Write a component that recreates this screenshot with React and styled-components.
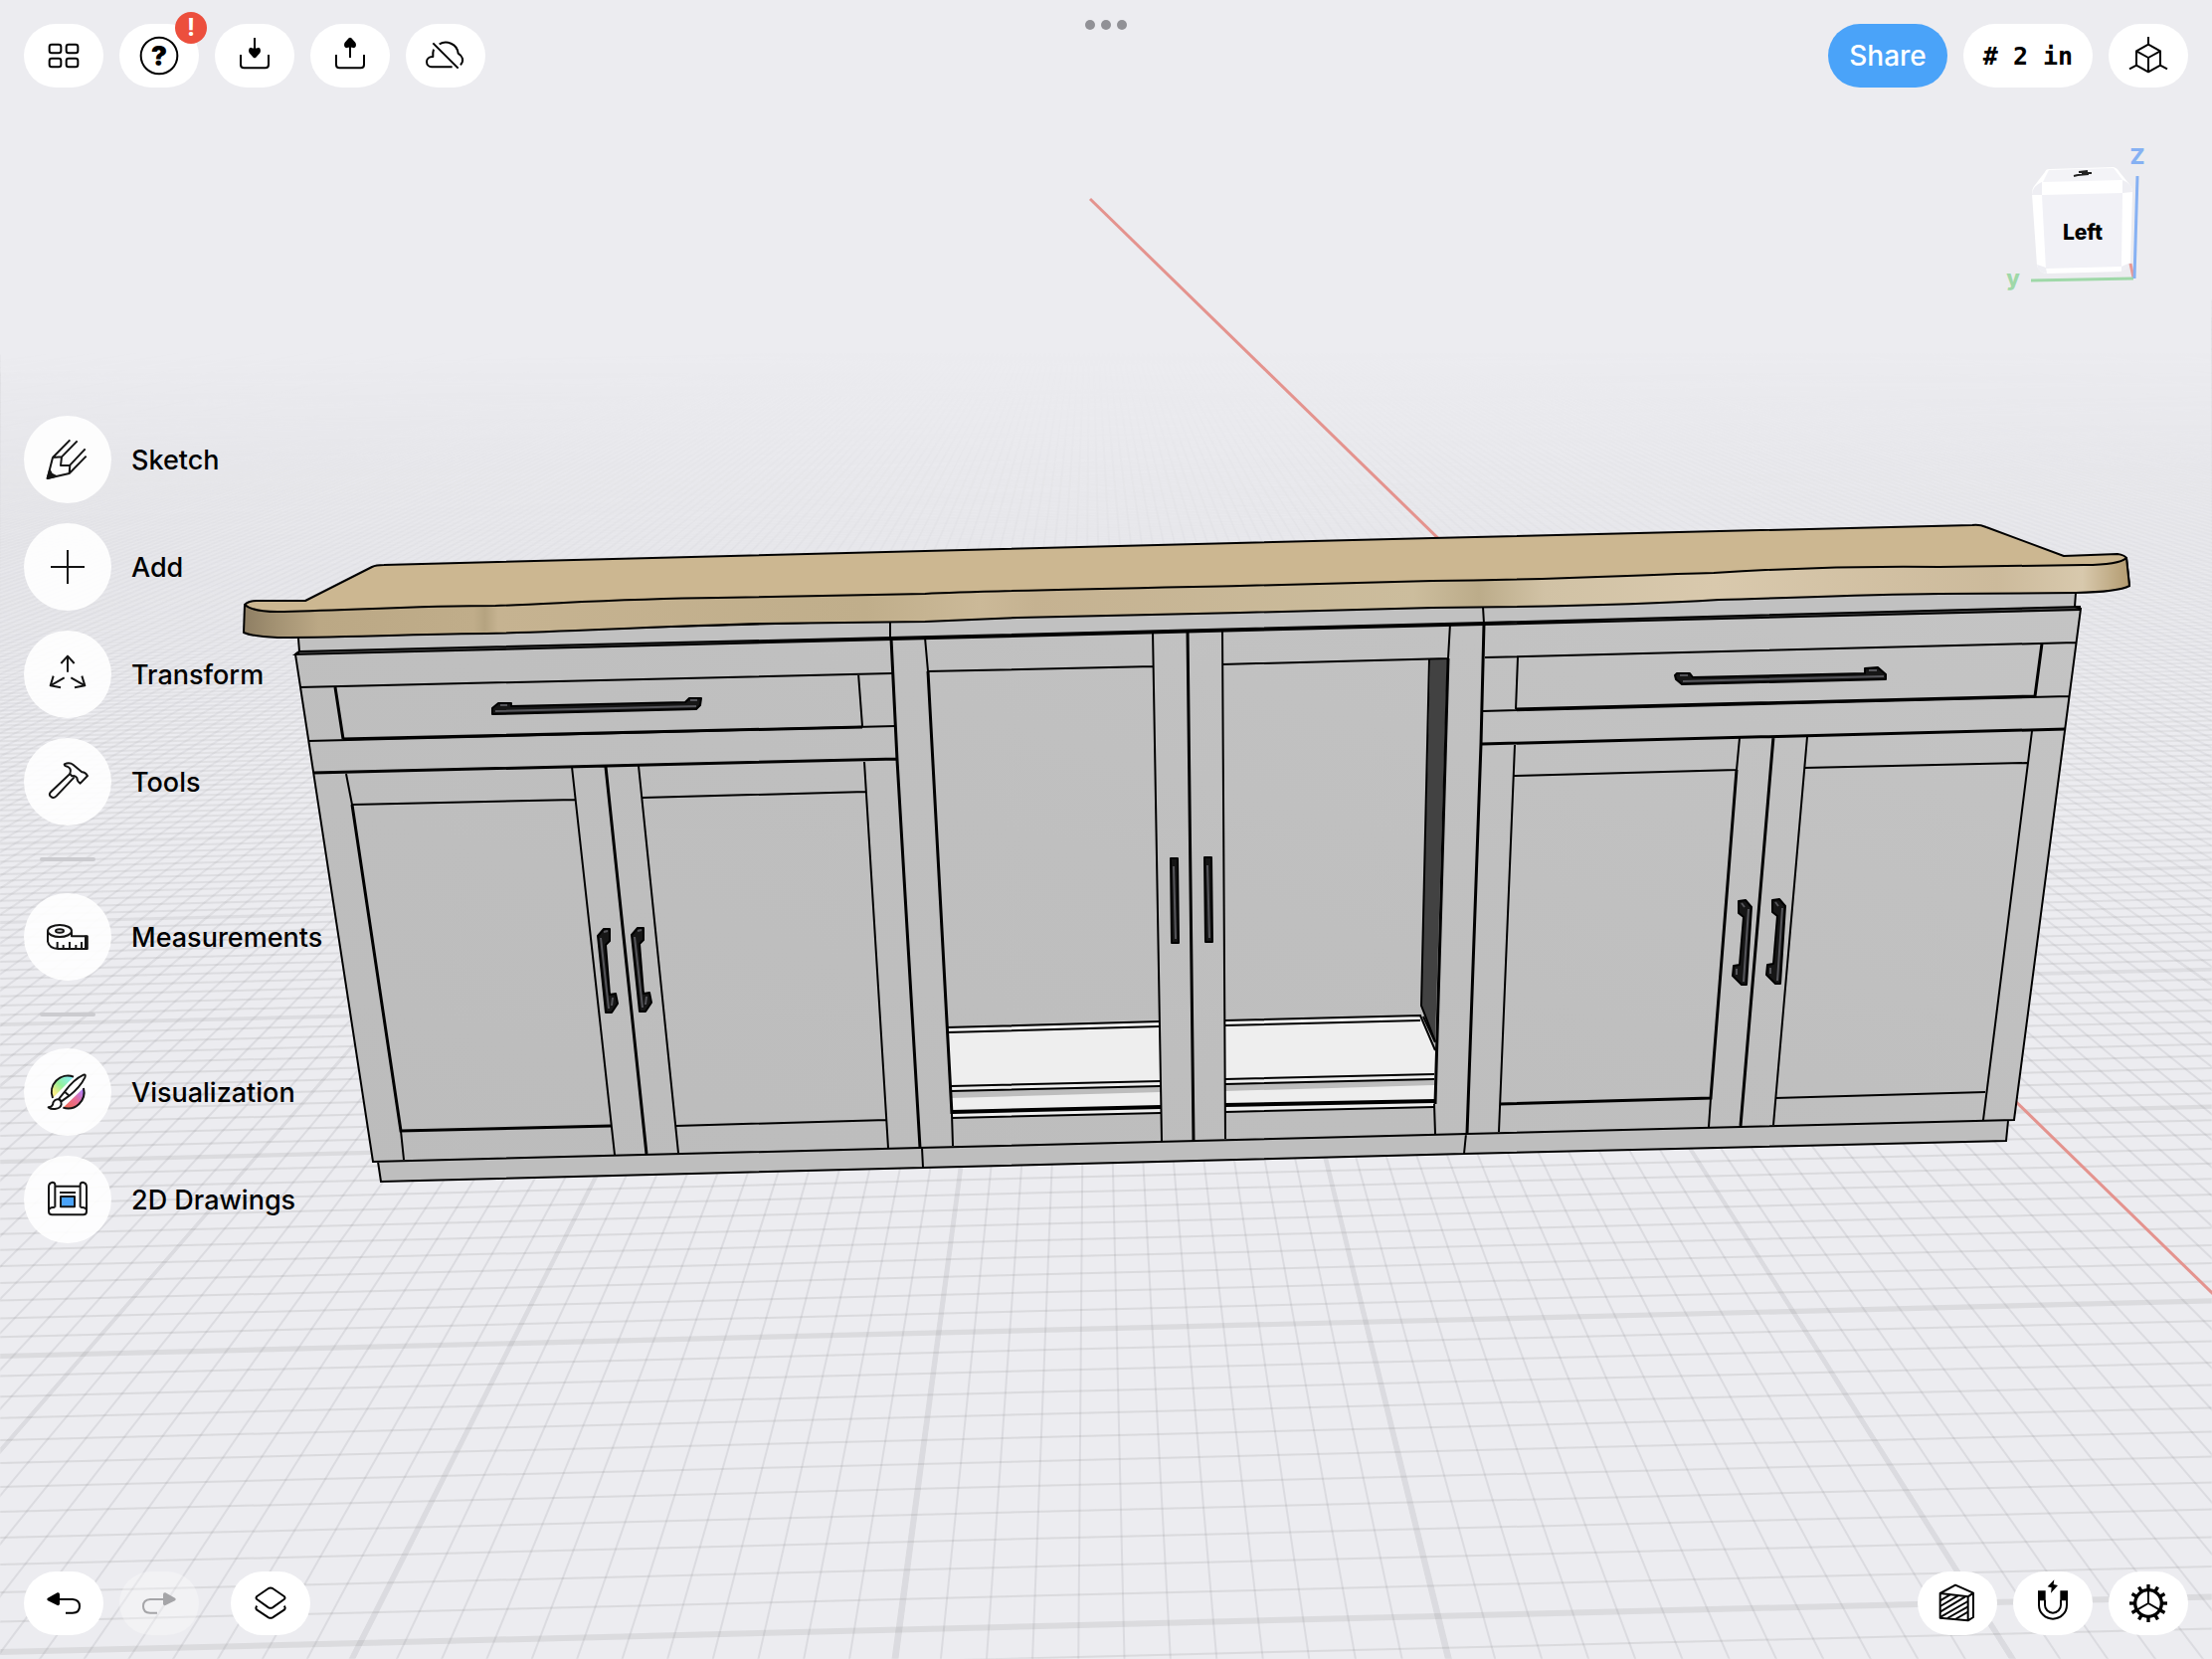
import React from "react";
import styled, { createGlobalStyle } from "styled-components";

const GlobalStyles = createGlobalStyle`
  * {
    box-sizing: border-box;
  }

  body {
    margin: 0;
    background: #ececf0;
    color: #000;
    font-family: Inter, "Liberation Sans", sans-serif;
  }
`;

const Workspace = styled.div`
  position: relative;
  display: grid;
  grid-template-rows: auto 1fr auto;
  min-height: 100vh;
  overflow: hidden;
`;

const Viewport = styled.svg`
  position: absolute;
  inset: 0;
  width: 100%;
  height: 100%;
`;

const Bar = styled.div`
  position: relative;
  display: grid;
  grid-template-columns: 1fr auto 1fr;
  align-items: start;
  padding: ${({ $bottom }) => ($bottom ? "0 24px 24px" : "24px 24px 0")};
`;

const ButtonGroup = styled.div`
  display: flex;
  gap: 16px;
  justify-content: ${({ $end }) => ($end ? "flex-end" : "flex-start")};
`;

const PillButton = styled.button`
  position: relative;
  display: flex;
  align-items: center;
  justify-content: center;
  width: ${({ $width }) => $width || "80px"};
  height: 64px;
  margin: 0 0 0 ${({ $spaced }) => ($spaced ? "16px" : "0")};
  padding: 0;
  border: 0;
  border-radius: 32px;
  background: ${({ $primary }) => ($primary ? "#4aa3f9" : "#fff")};
  color: ${({ $primary }) => ($primary ? "#fff" : "#000")};
  font: 500 28px Inter, "Liberation Sans", sans-serif;
  cursor: pointer;

  &:disabled {
    background: rgba(255, 255, 255, 0.3);
    color: #a5a5a8;
    cursor: default;
  }
`;

const UnitButton = styled(PillButton)`
  font: 700 25px "DejaVu Sans Mono", "Liberation Mono", monospace;
`;

const Badge = styled.span`
  position: absolute;
  top: -12px;
  right: -8px;
  width: 32px;
  height: 32px;
  border-radius: 50%;
  background: #ec4f3d;
  color: #fff;
  font-size: 24px;
  font-weight: 700;
  line-height: 32px;
  text-align: center;
`;

const MultitaskDots = styled.button`
  display: flex;
  gap: 6px;
  height: 10px;
  margin-top: -4px;
  padding: 0;
  border: 0;
  background: none;
`;

const Dot = styled.span`
  width: 10px;
  height: 10px;
  border-radius: 50%;
  background: #919196;
`;

const Main = styled.main`
  position: relative;
  display: flex;
  align-items: center;
  justify-content: space-between;
  padding: 0 44px 0 24px;
`;

const ToolMenu = styled.nav`
  display: flex;
  flex-direction: column;
  align-items: flex-start;
  gap: 20px;
`;

const ToolButton = styled.button`
  display: flex;
  align-items: center;
  gap: 20px;
  padding: 0;
  border: 0;
  background: none;
  color: #000;
  font: 500 27px Inter, "Liberation Sans", sans-serif;
  cursor: pointer;
`;

const ToolCircle = styled.span`
  display: flex;
  align-items: center;
  justify-content: center;
  width: 88px;
  height: 88px;
  border-radius: 50%;
  background: rgba(255, 255, 255, 0.9);
  color: #141414;
`;

const Divider = styled.hr`
  width: 56px;
  height: 4px;
  margin: 12px 16px;
  border: 0;
  border-radius: 2px;
  background: #cbcbcf;
`;

const ViewCubeSvg = styled.svg`
  align-self: flex-start;
  width: 170px;
  height: 160px;
  margin-top: 52px;
`;

const IconSvg = styled.svg`
  width: 50px;
  height: 50px;
  fill: none;
  stroke: currentColor;
  stroke-width: 6;
  stroke-linejoin: round;
`;

const Icon = ({ children }) => (
  <IconSvg viewBox="-75 -75 150 150" aria-hidden="true">
    {children}
  </IconSvg>
);

const TRAY = "M-42 -3V27Q-42 37 -32 37H32Q42 37 42 27V-3";
const ARROW_HEAD =
  "M-12 -25Q0 -20 12 -25Q18 -24 18 -15Q18 -9 12 -4L4 5Q0 9 -4 5L-12 -4Q-18 -9 -18 -15Q-18 -24 -12 -25Z";

const HomeIcon = () => (
  <Icon>
    {[-43, 8].map((x) =>
      [-34, 8].map((y) => (
        <rect key={`${x}${y}`} x={x} y={y} width="35" height="26" rx="7" />
      ))
    )}
  </Icon>
);

const HelpIcon = () => (
  <Icon>
    <circle r="55" />
    <text
      y="30"
      fill="currentColor"
      stroke="none"
      textAnchor="middle"
      fontSize="82"
      fontWeight="900"
    >
      ?
    </text>
  </Icon>
);

const ImportIcon = () => (
  <Icon>
    <path d={TRAY} />
    <path d="M0 -54V-18" />
    <path d={ARROW_HEAD} fill="currentColor" stroke="none" />
  </Icon>
);

const ExportIcon = () => (
  <Icon>
    <path d={TRAY} />
    <path d="M0 6V-30" />
    <path
      d={ARROW_HEAD}
      transform="translate(0 -48) scale(1 -1)"
      fill="currentColor"
      stroke="none"
    />
  </Icon>
);

const CloudOffIcon = () => (
  <Icon>
    <path d="M-38 -38L38 38" />
    <path d="M-36 -19Q-39 -10 -38 3C-50 2 -57 10 -57 18C-57 28 -50 34 -42 34H20" />
    <path d="M-19 -35C2 -47 35 -37 38 -7C51 1 57 15 45 28" />
  </Icon>
);

const AxisCubeIcon = () => (
  <Icon>
    <path d="M0 -34L36 -14V29L0 49L-36 29V-14ZM-36 -14L0 6L36 -14M0 6V49M0 -57V-34M-36 29L-57 40M36 29L57 40" />
  </Icon>
);

const SketchIcon = () => (
  <Icon>
    <path d="M-45 -6L-61 57L5 42L7 17L-21 18L-18 -8ZM-45 -6L7 -59M-18 -8L29 -56M7 17L53 -32M5 42L56 -10" />
    <path d="M-61 57L-54 33L-48 44L-36 50Z" fill="currentColor" />
  </Icon>
);

const AddIcon = () => (
  <Icon>
    <path d="M-51 0H51M0 -51V51" />
  </Icon>
);

const TransformIcon = () => (
  <Icon>
    <path d="M0 -7V-54M-20 -33L0 -55L20 -33M-10 10L-52 34M-43 5L-52 34L-21 40M10 10L52 34M43 5L52 34L21 40" />
  </Icon>
);

const ToolsIcon = () => (
  <Icon>
    <path d="M-10 -53Q6 -60 17 -51L43 -29Q52 -30 60 -18L38 5Q28 -2 28 -12Q22 -21 13 -17L7 -24Q13 -40 -1 -46Q-9 -47 -10 -53Z" />
    <path d="M7 -24L-50 30Q-59 39 -50 45Q-43 52 -34 43L20 -14" />
  </Icon>
);

const TapeIcon = () => (
  <Icon>
    <ellipse cx="-24" cy="-18" rx="36" ry="18" />
    <ellipse cx="-24" cy="-18" rx="12" ry="5" />
    <path d="M-60 -18V14Q-56 35 -28 36H58V-2H12V-16M-31 15V36M-13 24V36M6 15V36M25 24V36M42 15V36" />
    <path d="M51 -4H62V38H51Z" fill="currentColor" stroke="none" />
  </Icon>
);

const VisualizationIcon = () => (
  <Icon>
    <defs>
      <linearGradient id="coolTint" x1="0" y1="1" x2="1" y2="0">
        <stop offset="0.2" stopColor="#f7ee86" />
        <stop offset="0.5" stopColor="#92f09a" />
        <stop offset="0.9" stopColor="#8af0f2" />
      </linearGradient>
      <linearGradient id="warmTint" x1="0" y1="1" x2="1" y2="0">
        <stop offset="0.1" stopColor="#ee6a58" />
        <stop offset="0.5" stopColor="#ea6c92" />
        <stop offset="0.9" stopColor="#b07cfa" />
      </linearGradient>
    </defs>
    <path d="M-45 18A49 49 0 0 1 18 -46Z" fill="url(#coolTint)" stroke="none" />
    <path d="M-14 47A49 49 0 0 0 48 -12Z" fill="url(#warmTint)" stroke="none" />
    <path d="M-45 18A49 49 0 0 1 18 -46M-14 47A49 49 0 0 0 48 -12" />
    <path d="M-9 -1Q18 -38 48 -52Q56 -54 52 -44Q37 -14 5 11ZM-9 -1L-26 20L-19 28L5 11" fill="#fff" />
    <path d="M-24 23C-37 18 -45 30 -45 38Q-48 45 -58 46C-46 55 -22 52 -19 37Q-18 28 -24 23Z" />
  </Icon>
);

const DrawingsIcon = () => (
  <Icon>
    <path d="M-38 23V-44Q-38 -52 -46 -52Q-57 -50 -57 -38V36Q-57 46 -47 46H47Q57 46 57 36V-38Q57 -50 46 -52Q38 -52 38 -44V23M-38 -40H38M-57 31Q-54 23 -38 23M57 31Q54 23 38 23M-24 -21H24" />
    <rect x="-21" y="-9" width="42" height="31" fill="#4aa3f9" />
  </Icon>
);

const UndoIcon = ({ flip }) => (
  <Icon>
    <g transform={flip ? "scale(-1 1)" : undefined}>
      <path d="M-12 -12H27Q48 -11 48 9Q48 29 27 29H6" />
      <path
        d="M-48 -16L-19 -32Q-12 -34 -12 -26V1Q-12 8 -19 6L-48 -8Q-53 -12 -48 -16Z"
        fill="currentColor"
        stroke="none"
      />
    </g>
  </Icon>
);

const LayersIcon = () => (
  <Icon>
    <path d="M-6 -45Q0 -48 6 -45L41 -21Q46 -16 41 -12L6 13Q0 16 -6 13L-41 -12Q-46 -16 -41 -21Z" />
    <path d="M-41 8Q-47 15 -41 20L-6 43Q0 46 6 43L41 20Q47 15 41 8" />
  </Icon>
);

const SectionIcon = () => (
  <Icon>
    <path d="M-52 -30L-6 -55L48 -31V42L32 52L-52 44ZM-52 -30L32 -20V52M32 -20L48 -31" />
    <path d="M-52 -8L-22 -26M-52 9L2 -23M-52 26L24 -20M-50 41L32 -6M-30 45L32 10M-6 48L32 26" />
  </Icon>
);

const MagnetIcon = () => (
  <Icon>
    <path d="M-42 -10V5A42 42 0 0 0 42 5V-10M-24 -10V5A24 24 0 0 0 24 5V-10" />
    <path d="M-45 -38H-22V-8H-45ZM22 -38H45V-8H22ZM4 -71L-16 -50L-4 -47L-6 -31L15 -54L2 -57Z" fill="currentColor" stroke="none" />
  </Icon>
);

const GearIcon = () => (
  <Icon>
    <circle r="40" strokeWidth="10" />
    {Array.from({ length: 12 }, (_, i) => (
      <path key={i} d="M0 -42V-57" strokeWidth="10" transform={`rotate(${i * 30})`} />
    ))}
    <path d="M0 0V-38M0 0L-33 19M0 0L33 19" />
  </Icon>
);

// Ground plane: one unit is a foot, split in 12 inches.
const VANISH = { x: 1096, y: 200 };
const TILT = -0.025;

const planePoint = (s, u) =>
  `${(VANISH.x + s * u).toFixed(1)} ${(VANISH.y + u * (1 + TILT * s)).toFixed(1)}`;

const depthOf = (inch) => 1 / (0.0006975 + (0.0001827 * inch) / 12);

const slopeOf = (inch) => 1 + (0.378 * inch) / 12;

const rowPath = (inch) => {
  const u = depthOf(inch);
  return `M${planePoint(-1200 / u, u)}L${planePoint(1200 / u, u)}`;
};

const columnPath = (inch) => {
  const s = slopeOf(inch);
  return `M${planePoint(s, 130)}L${planePoint(s, 1600)}`;
};

// Foot lines get thinner towards the horizon
const wedgePath = (inch) => {
  const s = slopeOf(inch);
  return `M${planePoint(s, 130)}L${planePoint(s - 0.002, 1600)}L${planePoint(s + 0.002, 1600)}Z`;
};

const range = (from, to) =>
  Array.from({ length: to - from + 1 }, (_, i) => from + i);

const rows = range(-6, 400);
const columns = range(-330, 270);
const minorColumns = columns.filter((i) => i % 12 !== 0).map(columnPath).join("");
const majorColumns = columns.filter((i) => i % 12 === 0 && i !== 0).map(wedgePath).join("");

const Ground = () => (
  <g fill="none" stroke="#808084">
    <defs>
      <linearGradient id="fade" x1="0" y1="0" x2="0" y2="1668" gradientUnits="userSpaceOnUse">
        <stop offset="0.21" stopColor="#fff" stopOpacity="0" />
        <stop offset="0.26" stopColor="#fff" stopOpacity="0.1" />
        <stop offset="0.32" stopColor="#fff" stopOpacity="0.3" />
        <stop offset="0.45" stopColor="#fff" stopOpacity="0.65" />
        <stop offset="0.65" stopColor="#fff" stopOpacity="1" />
      </linearGradient>
      <mask id="groundFade" maskUnits="userSpaceOnUse" x="0" y="0" width="2224" height="1668">
        <rect width="2224" height="1668" fill="url(#fade)" />
      </mask>
    </defs>
    <g mask="url(#groundFade)">
      <path d={minorColumns} strokeWidth="2" strokeOpacity="0.15" />
      <path d={majorColumns} fill="#808084" stroke="#808084" strokeWidth="1" opacity="0.15" />
      {rows.map((i) => {
        const major = i % 12 === 0;
        const u = depthOf(i);
        return (
          <path
            key={i}
            d={rowPath(i)}
            strokeWidth={major ? Math.max(1, Math.min(6, u / 220)) : 2}
            strokeOpacity={(major ? 0.16 : 0.17) * Math.min(1, u / 500)}
          />
        );
      })}
    </g>
    <path d="M1096 200L2260 1335" stroke="#e4938e" strokeWidth="3" />
  </g>
);

const OUTLINES = `
  M300 642L301 655L297 658L375 1168L925 1154L1475 1140L2025 1126L2092 612L2086 610L2087 596
  M380 1168L383 1188L928 1174L1472 1160L2017 1147L2019 1127
  M302 691L897 677M310 745L900 730M863 677L867 730
  M348 778L354 809L578 804M403 1137L406 1166
  M575 771L618 1161M642 770L682 1159M646 802L871 796M679 1132L892 1126M869 766L893 1154
  M895 626V641M927 1154L928 1174M1491 610L1492 627M1474 1140L1472 1160
  M930 641L933 675L1160 670M957 1120L958 1152M1159 635L1168 1147M1229 633L1230 801L1232 1145
  M1229 668L1456 662L1458 627M1442 1110L1443 1140
  M1493 661L2087 646M1491 715L2080 700M1526 661L1524 713
  M1523 749L1507 1138M1522 780L1746 774L1749 742M1720 1104L1718 1133
  M1817 741L1783 1131M1814 772L2038 767M2043 735L1994 1126M1785 1104L1996 1098
`;

const HEAVY_LINES = `
  M315 777L901 763M337 691L345 743M354 809L403 1137L614 1132M609 771L650 1160
  M896 642L902 764L925 1154M933 675L957 1120M1194 633L1200 1147M1456 662L1443 1110
  M1492 627L1489 748L1475 1140M1490 748L2077 733M2053 647L2046 700
  M1508 1110L1720 1104L1746 774M1783 741L1750 1132M345 743L867 731M1524 713L2046 700
`;

const DOOR_FRONT = "M297 658L896 643L1492 627L2092 612L2025 1126L375 1168Z";

const CabinetInterior = () => (
  <g>
    <path d="M952 1033L1165 1027L1168 1119L957 1124Z" fill="#eee" />
    <path d="M1232 1026L1428 1021L1443 1056L1442 1113L1232 1118Z" fill="#eee" />
    <path d="M956 1097L1167 1092V1098L956 1104ZM1232 1090L1442 1085V1091L1232 1097Z" fill="#bdbdbd" />
    <path d="M1438 663L1455 662L1443 1047L1429 1011Z" fill="#424242" />
    <g fill="none" stroke="#000" strokeWidth="2">
      <path d="M952 1033L1165 1027M953 1038L1166 1032M956 1092L1167 1087M956 1097L1167 1092M957 1124L1167 1119" />
      <path d="M1232 1026L1428 1021L1443 1056M1232 1031L1428 1026M1232 1085L1442 1080M1232 1090L1442 1085M1232 1118L1442 1113M1431 1022L1443 1048" />
      <path d="M1437 663L1429 1011L1443 1047" />
      <path d="M957 1118L1167 1113M1232 1111L1442 1107" strokeWidth="4" />
    </g>
  </g>
);

const LEFT_PULL = "M601 941L607 934H613V946L609 950L613 1000L619 999L621 1009L615 1018H609Z";
const LEFT_PULL_SHINE = "M604 943L612 1014M607 937L611 936M616 1003L615 1011";
const RIGHT_PULL = "M1748 906L1755 905L1761 912L1756 990H1751L1742 981L1743 971L1749 970L1753 922L1748 918Z";
const RIGHT_PULL_SHINE = "M1758 914L1753 987M1751 908L1754 912M1746 974V980";
const CENTER_PULL = "M1177 863H1184L1185 948H1178Z";
const CENTER_PULL_SHINE = "M1180 871L1182 944";

const Pull = ({ shape, shine, dx = 0, dy = 0 }) => (
  <g transform={`translate(${dx} ${dy})`} strokeLinejoin="round">
    <path d={shape} fill="#161616" stroke="#000" strokeWidth="2" />
    <path d={shine} fill="none" stroke="#55555a" strokeWidth="2" />
  </g>
);

const COUNTER_FRONT_TOP =
  "M246 608Q254 615 279 615C340 614 420 609 498 609C560 607 620 602 721 601L930 597C990 594 1100 592 1247 589L1440 584C1570 583 1640 578 1723 576C1800 571 1870 569 1950 570L2096 568Q2130 568 2138 561";

const Countertop = () => (
  <g stroke="#000" strokeWidth="2" strokeLinejoin="round">
    <defs>
      <linearGradient id="edge" x1="245" y1="0" x2="2141" y2="0" gradientUnits="userSpaceOnUse">
        <stop offset="0" stopColor="#8e7e63" />
        <stop offset="0.015" stopColor="#a19071" />
        <stop offset="0.04" stopColor="#bba885" />
        <stop offset="0.122" stopColor="#c0ad8a" />
        <stop offset="0.128" stopColor="#b5a380" />
        <stop offset="0.135" stopColor="#c6b391" />
        <stop offset="0.33" stopColor="#c0ae8b" />
        <stop offset="0.39" stopColor="#cbb998" />
        <stop offset="0.42" stopColor="#c5b291" />
        <stop offset="0.62" stopColor="#ccbd9d" />
        <stop offset="0.655" stopColor="#bcac8a" />
        <stop offset="0.69" stopColor="#d1c2a5" />
        <stop offset="0.78" stopColor="#d9c9ad" />
        <stop offset="0.93" stopColor="#ccba9b" />
        <stop offset="0.975" stopColor="#d8c9ad" />
        <stop offset="1" stopColor="#b39b70" />
      </linearGradient>
    </defs>
    <path
      d="M246 608Q250 604 258 604H307L374 570Q378 568 386 568L930 554L1440 541L1983 528Q1990 527 1997 530L2075 559L2129 557Q2136 558 2138 561L2141 589L279 641Z"
      fill="#ccb791"
    />
    <path
      d={`${COUNTER_FRONT_TOP}L2141 589Q2130 595 2087 596L1950 597C1870 598 1800 601 1728 603C1650 608 1570 610 1440 611L1247 616L1023 621L930 625L766 627C680 629 580 635 489 637C430 637 360 641 279 641Q254 640 245 636Z`}
      fill="url(#edge)"
    />
  </g>
);

const Cabinet = () => (
  <g>
    <path d="M300 630L2087 590L2086 612L301 656Z" fill="#c1c1c1" />
    <path d="M380 1166L2019 1125L2017 1147L383 1188Z" fill="#bebebe" />
    <linearGradient id="front" x1="0" y1="1" x2="1" y2="0">
      <stop offset="0" stopColor="#bcbcbc" />
      <stop offset="0.5" stopColor="#bfbfbf" />
      <stop offset="1" stopColor="#c4c4c4" />
    </linearGradient>
    <path d={DOOR_FRONT} fill="url(#front)" />
    <CabinetInterior />
    <path
      d="M301 655L895 641L1492 626L2091 610V613L1492 628L896 643L297 658Z"
      fill="#555"
      stroke="#000"
      strokeWidth="2"
    />
    <path d={OUTLINES} fill="none" stroke="#000" strokeWidth="2" />
    <path d={HEAVY_LINES} fill="none" stroke="#000" strokeWidth="3" />
    <Countertop />
    <Pull
      shape="M495 718V712L501 707H514V710L689 706L693 702H705L704 709L700 713Z"
      shine="M498 715L700 710M503 709H510M694 704H701"
    />
    <Pull
      shape="M1684 679L1686 677H1699L1702 681L1875 677V672L1888 671L1896 678V683L1691 688L1685 683Z"
      shine="M1692 685L1894 680M1689 679H1697M1879 674H1887"
    />
    <Pull shape={LEFT_PULL} shine={LEFT_PULL_SHINE} />
    <Pull shape={LEFT_PULL} shine={LEFT_PULL_SHINE} dx={34} dy={-1} />
    <Pull shape={CENTER_PULL} shine={CENTER_PULL_SHINE} />
    <Pull shape={CENTER_PULL} shine={CENTER_PULL_SHINE} dx={34} dy={-1} />
    <Pull shape={RIGHT_PULL} shine={RIGHT_PULL_SHINE} />
    <Pull shape={RIGHT_PULL} shine={RIGHT_PULL_SHINE} dx={34} dy={-1} />
  </g>
);

const ViewCube = () => (
  <ViewCubeSvg viewBox="2010 140 170 160" role="img" aria-label="View cube">
    <path
      d="M2060 170L2125 168Q2129 169 2131 173L2140 184Q2144 188 2144 194L2142 263Q2142 268 2138 270L2132 273L2058 275Q2050 274 2048 267L2043 195Q2043 189 2046 186L2056 173Q2057 170 2060 170Z"
      fill="#fff"
    />
    <path d="M2060 171L2125 169L2134 181L2054 183Z" fill="#f3f3f7" />
    <path d="M2053 196L2134 194L2133 268L2057 270Z" fill="#f1f1f6" />
    <path
      d="M2053 183V196H2043Q2043 187 2053 183ZM2134 181Q2143 184 2144 193L2134 194ZM2048 266L2057 269L2058 275Q2049 274 2048 266ZM2133 268L2142 264Q2141 272 2133 273Z"
      fill="#eeeef3"
    />
    <path d="M2085 177L2089 176M2090 173L2099 172M2089 176L2100 175M2093 174L2103 174" stroke="#222" strokeWidth="2" />
    <text x="2094" y="241" textAnchor="middle" fontSize="21" fontWeight="800">
      Left
    </text>
    <path d="M2142 265L2145 279" stroke="#e79a96" strokeWidth="3" />
    <path d="M2042 282L2145 280" stroke="#9fd8a8" strokeWidth="3" />
    <path d="M2149 177L2146 280" stroke="#86b1f3" strokeWidth="3" />
    <text x="2149" y="165" textAnchor="middle" fontSize="22" fontWeight="800" fill="#86b1f3">
      Z
    </text>
    <text x="2024" y="287" textAnchor="middle" fontSize="22" fontWeight="800" fill="#9fd8a8">
      y
    </text>
  </ViewCubeSvg>
);

const Tool = ({ icon: ToolIcon, label }) => (
  <ToolButton type="button">
    <ToolCircle>
      <ToolIcon />
    </ToolCircle>
    {label}
  </ToolButton>
);

function App() {
  return (
    <Workspace>
      <GlobalStyles />
      <Viewport viewBox="0 0 2224 1668" preserveAspectRatio="xMidYMid slice" aria-hidden="true">
        <Ground />
        <Cabinet />
      </Viewport>
      <Bar as="header">
        <ButtonGroup>
          <PillButton type="button" aria-label="Home">
            <HomeIcon />
          </PillButton>
          <PillButton type="button" aria-label="Help">
            <HelpIcon />
            <Badge>!</Badge>
          </PillButton>
          <PillButton type="button" aria-label="Import">
            <ImportIcon />
          </PillButton>
          <PillButton type="button" aria-label="Export">
            <ExportIcon />
          </PillButton>
          <PillButton type="button" aria-label="Sync off">
            <CloudOffIcon />
          </PillButton>
        </ButtonGroup>
        <MultitaskDots type="button" aria-label="Multitasking">
          <Dot />
          <Dot />
          <Dot />
        </MultitaskDots>
        <ButtonGroup $end>
          <PillButton type="button" $primary $width="120px">
            Share
          </PillButton>
          <UnitButton type="button" $width="130px">
            # 2 in
          </UnitButton>
          <PillButton type="button" aria-label="Views">
            <AxisCubeIcon />
          </PillButton>
        </ButtonGroup>
      </Bar>
      <Main>
        <ToolMenu>
          <Tool icon={SketchIcon} label="Sketch" />
          <Tool icon={AddIcon} label="Add" />
          <Tool icon={TransformIcon} label="Transform" />
          <Tool icon={ToolsIcon} label="Tools" />
          <Divider />
          <Tool icon={TapeIcon} label="Measurements" />
          <Divider />
          <Tool icon={VisualizationIcon} label="Visualization" />
          <Tool icon={DrawingsIcon} label="2D Drawings" />
        </ToolMenu>
        <ViewCube />
      </Main>
      <Bar as="footer" $bottom>
        <ButtonGroup>
          <PillButton type="button" aria-label="Undo">
            <UndoIcon />
          </PillButton>
          <PillButton type="button" aria-label="Redo" disabled>
            <UndoIcon flip />
          </PillButton>
          <PillButton type="button" aria-label="Items" $spaced>
            <LayersIcon />
          </PillButton>
        </ButtonGroup>
        <span />
        <ButtonGroup $end>
          <PillButton type="button" aria-label="Section view">
            <SectionIcon />
          </PillButton>
          <PillButton type="button" aria-label="Snapping">
            <MagnetIcon />
          </PillButton>
          <PillButton type="button" aria-label="Settings">
            <GearIcon />
          </PillButton>
        </ButtonGroup>
      </Bar>
    </Workspace>
  );
}

export default App;
